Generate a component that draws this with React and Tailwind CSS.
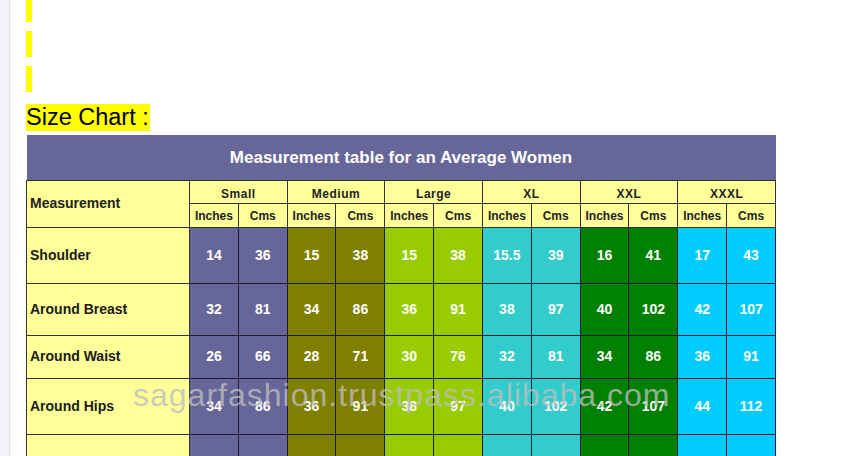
const sizes = [
  { name: "Small", bg: "bg-[#666699]" },
  { name: "Medium", bg: "bg-[#808000]" },
  { name: "Large", bg: "bg-[#99cc00]" },
  { name: "XL", bg: "bg-[#33cccc]" },
  { name: "XXL", bg: "bg-[#008000]" },
  { name: "XXXL", bg: "bg-[#00ccff]" },
];

const rows = [
  { label: "Shoulder", h: "h-[56px]", vals: ["14", "36", "15", "38", "15", "38", "15.5", "39", "16", "41", "17", "43"] },
  { label: "Around Breast", h: "h-[52px]", vals: ["32", "81", "34", "86", "36", "91", "38", "97", "40", "102", "42", "107"] },
  { label: "Around Waist", h: "h-[43px]", vals: ["26", "66", "28", "71", "30", "76", "32", "81", "34", "86", "36", "91"] },
  { label: "Around Hips", h: "h-[56px]", vals: ["34", "86", "36", "91", "38", "97", "40", "102", "42", "107", "44", "112"] },
  { label: "", h: "h-[56px]", vals: ["", "", "", "", "", "", "", "", "", "", "", ""] },
];

export default function App() {
  return (
    <div className="flex h-[456px] w-[841px] overflow-hidden bg-white font-['Liberation_Sans',Arial,sans-serif]">
      {/* left page gutter */}
      <div className="w-[10px] shrink-0 border-r border-[#e2e2ea] bg-[#f3f3f7]" />

      <div className="relative flex flex-col pl-[16px]">
        {/* dashed yellow marker */}
        <div className="flex flex-col gap-[9px]">
          <div className="h-[22px] w-[6px] bg-[#ffff00]" />
          <div className="h-[26px] w-[6px] bg-[#ffff00]" />
          <div className="h-[26px] w-[6px] bg-[#ffff00]" />
        </div>

        <div className="mt-[12px]">
          <span className="inline-block bg-[#ffff00] pr-[1px] text-[23.5px] leading-[27px] text-black">Size Chart :</span>
        </div>

        <table className="mt-[3px] w-[750px] table-fixed border-collapse text-[#222]">
          <colgroup>
            <col className="w-[163px]" />
            {Array.from({ length: 12 }).map((_, i) => (
              <col key={i} />
            ))}
          </colgroup>
          <thead>
            <tr className="h-[45px] bg-[#666699]">
              <th colSpan={13} className="pt-[1px] text-center text-[17px] font-bold text-white">
                Measurement table for an Average Women
              </th>
            </tr>
            <tr className="h-[23px] bg-[#ffff99] text-[12px] font-bold">
              <th rowSpan={2} className="border border-[#333] pl-[3px] text-left text-[14px]">
                Measurement
              </th>
              {sizes.map((s) => (
                <th key={s.name} colSpan={2} className="border border-[#333] pt-[4px] tracking-[0.5px]">
                  {s.name}
                </th>
              ))}
            </tr>
            <tr className="h-[24px] bg-[#ffff99] text-[12px] font-bold">
              {sizes.map((s) => [
                <th key={s.name + "i"} className="border border-[#333] pt-[2px]">Inches</th>,
                <th key={s.name + "c"} className="border border-[#333] pt-[2px]">Cms</th>,
              ])}
            </tr>
          </thead>
          <tbody>
            {rows.map((r, ri) => (
              <tr key={ri} className={r.h}>
                <td className="border border-[#333] bg-[#ffff99] pl-[3px] text-[14px] font-bold text-[#1a1a1a]">
                  {r.label}
                </td>
                {r.vals.map((v, i) => (
                  <td
                    key={i}
                    className={`border border-[#1a1a33] text-center text-[14px] font-bold text-white ${sizes[Math.floor(i / 2)].bg}`}
                  >
                    {v}
                  </td>
                ))}
              </tr>
            ))}
          </tbody>
        </table>

        {/* watermark */}
        <div className="pointer-events-none absolute left-[123px] top-[378px] whitespace-nowrap text-[32px] leading-[34px] tracking-[1px] text-[#bdbdbd]/80">
          sagarfashion.trustpass.alibaba.com
        </div>
      </div>
    </div>
  );
}
